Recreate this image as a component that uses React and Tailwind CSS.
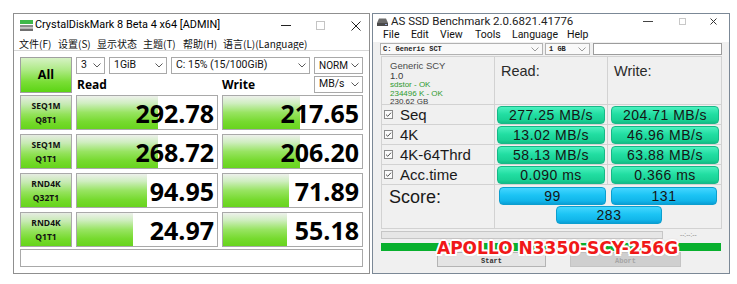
import React from 'react';

const cdmRows = [
  { a: 'SEQ1M', b: 'Q8T1', r: '292.78', rf: 81, w: '217.65', wf: 77 },
  { a: 'SEQ1M', b: 'Q1T1', r: '268.72', rf: 81, w: '206.20', wf: 77 },
  { a: 'RND4K', b: 'Q32T1', r: '94.95', rf: 70, w: '71.89', wf: 66 },
  { a: 'RND4K', b: 'Q1T1', r: '24.97', rf: 56, w: '55.18', wf: 64 },
];

const asRows = [
  { l: 'Seq', r: '277.25 MB/s', w: '204.71 MB/s' },
  { l: '4K', r: '13.02 MB/s', w: '46.96 MB/s' },
  { l: '4K-64Thrd', r: '58.13 MB/s', w: '63.88 MB/s' },
  { l: 'Acc.time', r: '0.090 ms', w: '0.366 ms' },
];

function Chev({ color = '#5a5a5a' }) {
  return (
    <svg className="shrink-0" width="8" height="5" viewBox="0 0 8 5">
      <path d="M0.5 0.5 L4 4 L7.5 0.5" fill="none" stroke={color} strokeWidth="1" />
    </svg>
  );
}

function Drop({ className, children }) {
  return (
    <div className={`flex items-center justify-between h-[17px] border border-[#a9a9a9] bg-white pl-[4px] pr-[3px] text-[10.5px] text-[#111] ${className}`}>
      <span className="leading-none whitespace-nowrap">{children}</span>
      <Chev />
    </div>
  );
}

function CdmIcon() {
  return (
    <svg width="13" height="11" viewBox="0 0 13 11">
      <rect x="0" y="0" width="13" height="4" fill="#3fb84a" />
      <rect x="0" y="5" width="13" height="2.5" fill="#8c8c8c" />
      <rect x="0" y="8.5" width="13" height="2.5" fill="#6f6f6f" />
    </svg>
  );
}

function DriveIcon() {
  return (
    <svg width="11" height="8" viewBox="0 0 11 8">
      <path d="M2 0.5 L9 0.5 L11 5 L0 5 Z" fill="#6b6b6b" />
      <rect x="0" y="5" width="11" height="3" fill="#4a4a4a" />
      <rect x="8" y="6" width="2" height="1" fill="#9ad" />
    </svg>
  );
}

function CheckBox() {
  return (
    <svg width="9" height="9" viewBox="0 0 9 9">
      <rect x="0.5" y="0.5" width="8" height="8" fill="#fafafa" stroke="#8a8a8a" />
      <path d="M2 4.6 L3.8 6.3 L7 2.7" fill="none" stroke="#555" strokeWidth="1" />
    </svg>
  );
}

function CDM() {
  return (
    <div className="w-[357px] h-[261px] shrink-0 border border-[#8f8f8f] bg-white flex flex-col font-['Roboto',sans-serif]">
      <div className="h-[23px] flex items-center pl-[6px]">
        <CdmIcon />
        <span className="ml-[2px] text-[10.9px] text-black leading-none">CrystalDiskMark 8 Beta 4 x64 [ADMIN]</span>
        <div className="ml-auto flex items-center pr-[8px]">
          <div className="w-[10px] h-px bg-[#222]" />
          <div className="ml-[25px] w-[9px] h-[9px] border border-[#c4c4c4]" />
          <svg className="ml-[26px]" width="10" height="10" viewBox="0 0 10 10">
            <path d="M0.5 0.5 L9.5 9.5 M9.5 0.5 L0.5 9.5" stroke="#222" strokeWidth="1" />
          </svg>
        </div>
      </div>
      <div className="h-[13px] flex items-center pl-[5px] text-[10px] leading-none text-[#111] font-['Noto_Sans_CJK_SC',sans-serif]">
        <span className="w-[39px]">文件(F)</span>
        <span className="w-[39px]">设置(S)</span>
        <span className="w-[46px]">显示状态</span>
        <span className="w-[40px]">主题(T)</span>
        <span className="w-[40px]">帮助(H)</span>
        <span>语言(L)(Language)</span>
      </div>
      <div className="h-px bg-[#d6d6d6]" />
      <div className="flex flex-col px-[6px] pt-[6px]">
        <div className="flex gap-[4px] h-[36px]">
          <div className="w-[52px] h-[36px] border border-[#a0a0a0] bg-[linear-gradient(180deg,#d6f2c4_0%,#aeea86_35%,#7ade36_70%,#5cd414_100%)] flex items-center justify-center">
            <span className="font-['Open_Sans',sans-serif] font-bold text-[12.5px] text-black leading-none">All</span>
          </div>
          <div className="flex flex-col gap-[2px] w-[287px]">
            <div className="flex gap-[4px]">
              <Drop className="w-[29px]">3</Drop>
              <Drop className="w-[58px]">1GiB</Drop>
              <Drop className="w-[139px]">C: 15% (15/100GiB)</Drop>
              <Drop className="w-[49px] text-[10px]">NORM</Drop>
            </div>
            <div className="flex gap-[4px] items-center">
              <div className="w-[142px] pl-[1px] font-['Open_Sans',sans-serif] font-bold text-[12px] leading-none text-black">Read</div>
              <div className="w-[88px] font-['Open_Sans',sans-serif] font-bold text-[12px] leading-none text-black">Write</div>
              <Drop className="w-[49px]">MB/s</Drop>
            </div>
          </div>
        </div>
        <div className="mt-[2px] flex flex-col gap-[4px]">
          {cdmRows.map((row, i) => (
            <div key={i} className="flex gap-[4px] h-[35px]">
              <div className="w-[52px] h-full border border-[#a9a9a9] bg-[linear-gradient(180deg,#e6ece2_0%,#c6eab2_25%,#94e25c_55%,#74da2a_80%,#66d41c_100%)] flex flex-col items-center justify-center">
                <span className="font-['Open_Sans',sans-serif] font-bold text-[8.5px] leading-[14px] text-[#111]">{row.a}</span>
                <span className="font-['Open_Sans',sans-serif] font-bold text-[8.5px] leading-[14px] text-[#111]">{row.b}</span>
              </div>
              <div className="relative w-[142px] h-full border border-[#a9a9a9] bg-white flex items-center justify-end pr-[3px]">
                <div className="absolute left-0 top-0 bottom-0 bg-[linear-gradient(180deg,#eef1ec_0%,#cfeec0_22%,#98e462_50%,#76da2e_78%,#68d41e_100%)]" style={{ width: row.rf }} />
                <span className="relative font-['Open_Sans',sans-serif] font-bold text-[25px] leading-none text-black pt-[2px]">{row.r}</span>
              </div>
              <div className="relative w-[141px] h-full border border-[#a9a9a9] bg-white flex items-center justify-end pr-[3px]">
                <div className="absolute left-0 top-0 bottom-0 bg-[linear-gradient(180deg,#eef1ec_0%,#cfeec0_22%,#98e462_50%,#76da2e_78%,#68d41e_100%)]" style={{ width: row.wf }} />
                <span className="relative font-['Open_Sans',sans-serif] font-bold text-[25px] leading-none text-black pt-[2px]">{row.w}</span>
              </div>
            </div>
          ))}
        </div>
        <div className="mt-[2px] h-[18px] border border-[#a9a9a9] bg-white" />
      </div>
    </div>
  );
}

function ValuePill({ children }) {
  return (
    <div className="h-[18px] w-full rounded-[4px] border border-[#17b988] bg-[linear-gradient(180deg,#4cf0bf_0%,#22dea2_45%,#1ad296_80%,#12bd86_100%)] flex items-center justify-center text-[14px] leading-none tracking-[0.5px] text-[#151515]">
      {children}
    </div>
  );
}

function ScorePill({ className, children }) {
  return (
    <div className={`h-[18px] rounded-[4px] border border-[#0c9fcf] bg-[linear-gradient(180deg,#44d6ff_0%,#1cc4f4_45%,#12b6ea_80%,#0a9fd6_100%)] flex items-center justify-center text-[14px] leading-none tracking-[0.5px] text-[#151515] ${className}`}>
      {children}
    </div>
  );
}

function ASSSD() {
  return (
    <div className="relative w-[358px] h-[261px] shrink-0 border border-[#7b8896] bg-[#f0f0f0] flex flex-col font-['Liberation_Sans',Arial,sans-serif]">
      <div className="h-[15px] bg-white flex items-center pl-[4px]">
        <DriveIcon />
        <span className="ml-[3px] text-[11.5px] leading-none text-[#222] font-['Roboto',sans-serif]">AS SSD Benchmark 2.0.6821.41776</span>
        <div className="ml-auto flex items-center pr-[12px]">
          <div className="w-[10px] h-px bg-[#444]" />
          <div className="ml-[26px] w-[7px] h-[7px] border border-[#c8c8c8]" />
          <svg className="ml-[24px]" width="7" height="7" viewBox="0 0 7 7">
            <path d="M0.5 0.5 L6.5 6.5 M6.5 0.5 L0.5 6.5" stroke="#333" strokeWidth="1" />
          </svg>
        </div>
      </div>
      <div className="h-[13px] bg-white flex items-center pl-[10px] text-[10.5px] leading-none text-[#111] font-['Roboto',sans-serif]">
        <span className="w-[28px]">File</span>
        <span className="w-[29px]">Edit</span>
        <span className="w-[35px]">View</span>
        <span className="w-[37px]">Tools</span>
        <span className="w-[55px]">Language</span>
        <span>Help</span>
      </div>
      <div className="flex items-center pl-[7px] pt-[1px]">
        <div className="w-[163px] h-[12px] border border-[#b2b2b2] bg-[#f9f9f9] flex items-center justify-between pl-[2px] pr-[3px]">
          <span className="font-['Liberation_Mono',monospace] font-bold text-[7px] leading-none text-[#222]">C: Generic SCT</span>
          <Chev color="#9a9a9a" />
        </div>
        <div className="ml-[2px] w-[45px] h-[12px] border border-[#b2b2b2] bg-[#f9f9f9] flex items-center justify-between pl-[3px] pr-[3px]">
          <span className="font-['Liberation_Mono',monospace] font-bold text-[7px] leading-none text-[#222]">1 GB</span>
          <Chev color="#9a9a9a" />
        </div>
        <div className="ml-[3px] w-[129px] h-[12px] border border-[#9c9c9c] bg-white" />
      </div>
      <div className="ml-[8px] mt-[1px] w-[341px] border-l border-t border-[#d2d2d2] grid grid-cols-[113px_113px_114px]">
        <div className="h-[48px] border-r border-b border-[#d2d2d2] pl-[8px] pt-[3px] flex flex-col">
          <span className="text-[9.5px] leading-[11px] text-[#4a4a4a]">Generic SCY</span>
          <span className="text-[9.5px] leading-[10px] text-[#3a3a3a]">1.0</span>
          <span className="text-[8px] leading-[8.5px] text-[#2f9a2f]">sdstor - OK</span>
          <span className="text-[8px] leading-[8.5px] text-[#2f9a2f]">234496 K - OK</span>
          <span className="text-[8px] leading-[8.5px] text-[#3a3a3a]">230.62 GB</span>
        </div>
        <div className="h-[48px] border-r border-b border-[#d2d2d2] pl-[6px] pt-[2px]">
          <span className="text-[14.5px] leading-[16px] text-[#2a2a2a]">Read:</span>
        </div>
        <div className="h-[48px] border-r border-b border-[#d2d2d2] pl-[6px] pt-[2px]">
          <span className="text-[14.5px] leading-[16px] text-[#2a2a2a]">Write:</span>
        </div>
        {asRows.map((row, i) => (
          <React.Fragment key={i}>
            <div className="h-[20px] border-r border-b border-[#d2d2d2] pl-[2px] flex items-center">
              <CheckBox />
              <span className="ml-[7px] text-[15px] leading-none text-[#1a1a1a]">{row.l}</span>
            </div>
            <div className="h-[20px] border-r border-b border-[#d2d2d2] px-[2px] flex items-center">
              <ValuePill>{row.r}</ValuePill>
            </div>
            <div className="h-[20px] border-r border-b border-[#d2d2d2] pl-[3px] pr-[2px] flex items-center">
              <ValuePill>{row.w}</ValuePill>
            </div>
          </React.Fragment>
        ))}
        <div className="h-[44px] border-r border-b border-[#d2d2d2] pl-[7px] pt-[1px]">
          <span className="text-[18px] leading-[20px] text-[#1a1a1a]">Score:</span>
        </div>
        <div className="col-span-2 h-[44px] border-r border-b border-[#d2d2d2] pt-[2px] flex flex-col">
          <div className="flex pl-[4px] gap-[5px]">
            <ScorePill className="w-[107px]">99</ScorePill>
            <ScorePill className="w-[106px]">131</ScorePill>
          </div>
          <ScorePill className="ml-[61px] mt-[1px] w-[106px]">283</ScorePill>
        </div>
      </div>
      <div className="ml-[8px] mt-[2px] flex items-center">
        <div className="w-[282px] h-[8px] border border-[#c6c6c6] bg-[#e6e6e6]" />
        <span className="ml-[17px] text-[6.5px] leading-none text-[#8a8a8a]">--:--:--</span>
      </div>
      <div className="ml-[8px] mt-[4px] w-[340px] h-[8px] bg-[#08b02e]" />
      <div className="ml-[8px] mt-[1px] flex">
        <div className="ml-[56px] w-[109px] h-[15px] border border-[#b4b4b4] bg-[#e4e4e4] flex items-center justify-center">
          <span className="font-['Liberation_Mono',monospace] font-bold text-[7px] leading-none text-[#333] pt-[4px]">Start</span>
        </div>
        <div className="ml-[24px] w-[111px] h-[15px] border border-[#c4c4c4] bg-[#cfcfcf] flex items-center justify-center">
          <span className="font-['Liberation_Mono',monospace] font-bold text-[7px] leading-none text-[#a6a6a6] pt-[4px]">Abort</span>
        </div>
      </div>
      <div className="absolute left-[64px] top-[226px] font-['DejaVu_Sans',sans-serif] font-bold text-[17px] leading-[16px] text-[#f01818] whitespace-nowrap [text-shadow:-2px_0_0_#fff,2px_0_0_#fff,0_-2px_0_#fff,0_2px_0_#fff,-1.5px_-1.5px_0_#fff,1.5px_-1.5px_0_#fff,-1.5px_1.5px_0_#fff,1.5px_1.5px_0_#fff,0_0_3px_rgba(120,0,0,0.7)]">
        APOLLO N3350-SCY-256G
      </div>
    </div>
  );
}

export default function App() {
  return (
    <div className="w-[737px] h-[284px] bg-white flex items-start pt-[13px] pl-[13px] gap-[2px] overflow-hidden">
      <CDM />
      <ASSSD />
    </div>
  );
}
